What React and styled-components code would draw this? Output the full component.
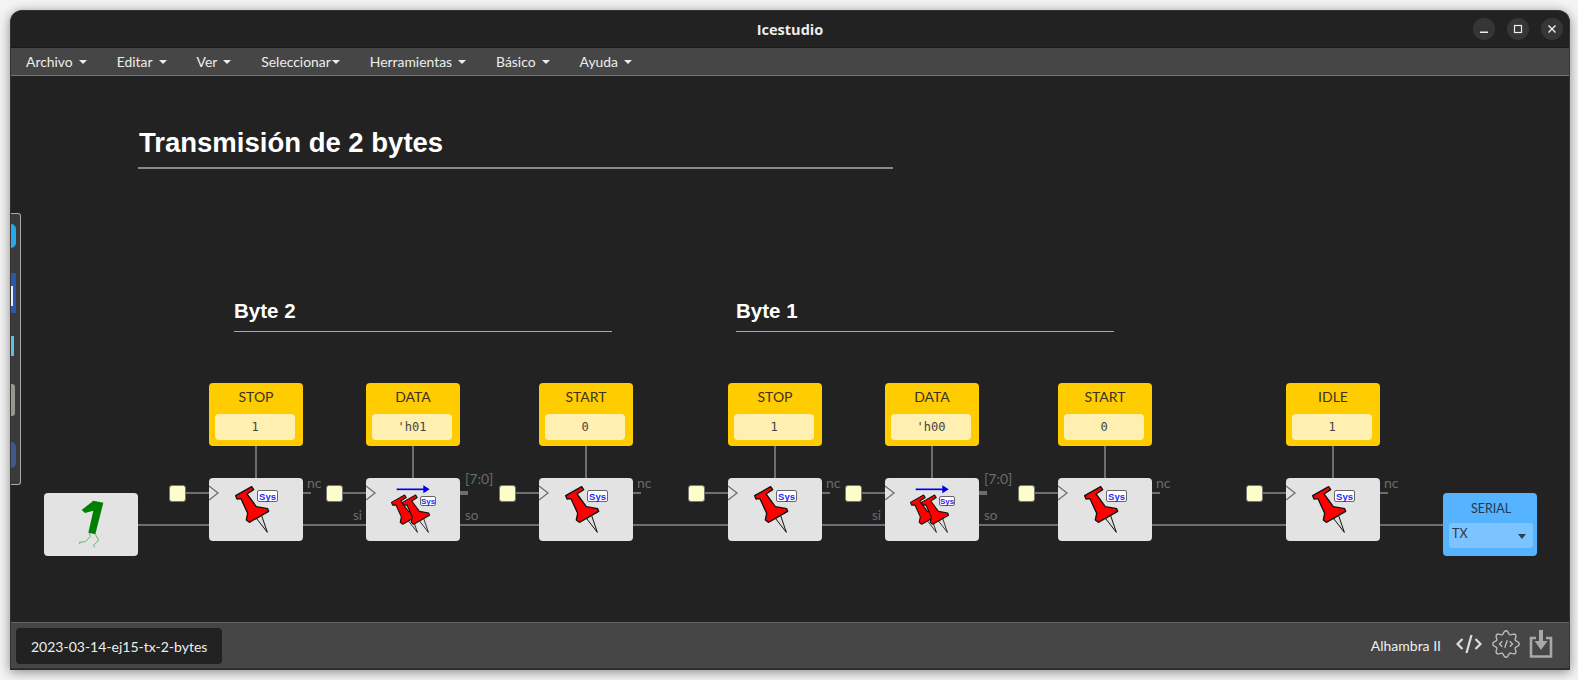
import React from 'react';
import styled, { createGlobalStyle } from 'styled-components';

const OX = 11;
const OY = 76;

const Global = createGlobalStyle`
  html, body { margin: 0; padding: 0; height: 100%; background: #f4f4f4; overflow: hidden; }
  #root { height: 100%; }
`;

const Page = styled.div`
  width: 1578px;
  height: 680px;
  padding: 10px 8px 10px 10px;
  box-sizing: border-box;
  font-family: Lato, "Noto Sans", sans-serif;
`;
const Win = styled.div`
  height: 660px;
  display: flex;
  flex-direction: column;
  background: #222;
  border: 1px solid #333;
  border-bottom-color: #2a2a2a;
  border-radius: 12px 12px 0 0;
  box-shadow: 0 2px 12px rgba(0,0,0,.45);
  overflow: hidden;
  box-sizing: border-box;
`;
const TitleBar = styled.header`
  height: 36px;
  flex: none;
  position: relative;
  display: flex;
  align-items: center;
  justify-content: center;
  background: #222;
  border-bottom: 1px solid #1a1a1a;
`;
const AppTitle = styled.h1`
  margin: 0;
  font: 700 14.5px "Open Sans", sans-serif;
  color: #ececec;
`;
const WinButtons = styled.div`
  position: absolute;
  right: 6px;
  top: 7px;
  display: flex;
  gap: 12px;
`;
const WinBtn = styled.button`
  width: 22px;
  height: 22px;
  padding: 0;
  border: 0;
  border-radius: 50%;
  background: #363636;
  display: flex;
  align-items: center;
  justify-content: center;
`;
const MenuBar = styled.nav`
  height: 28px;
  flex: none;
  display: flex;
  align-items: center;
  padding-left: 15px;
  background: #464646;
  border-bottom: 1px solid #757575;
  box-sizing: border-box;
`;
const MenuItem = styled.div`
  display: flex;
  align-items: center;
  gap: ${p => (p.$tight ? '1px' : '6px')};
  margin-right: 30px;
  font-size: 13.9px;
  color: #eee;
  &::after {
    content: '';
    border-top: 4px solid #eee;
    border-left: 4px solid transparent;
    border-right: 4px solid transparent;
  }
`;
const Canvas = styled.main`
  position: relative;
  flex: 1;
  background: #222;
  overflow: hidden;
`;
const Wires = styled.svg`
  position: absolute;
  left: 0;
  top: 0;
  width: 100%;
  height: 100%;
`;
const Node = styled.div`
  position: absolute;
  left: ${p => p.$x - OX}px;
  top: ${p => p.$y - OY}px;
`;
const Heading = styled(Node)`
  width: ${p => p.$w}px;
  box-sizing: border-box;
  padding: 0 0 6px ${p => (p.$big ? 1 : 0)}px;
  color: #fff;
  font-family: "Liberation Sans", Arial, sans-serif;
  font-weight: 700;
  font-size: ${p => p.$size}px;
  line-height: ${p => p.$lh}px;
  border-bottom: ${p => (p.$big ? 2 : 1.5)}px solid ${p => (p.$big ? '#8a8a8a' : '#aaa')};
`;
const ConstBox = styled(Node)`
  width: 94px;
  height: 63px;
  box-sizing: border-box;
  padding: 0 8px 6px 6px;
  display: flex;
  flex-direction: column;
  background: #ffcc00;
  border-radius: 4px;
`;
const ConstLabel = styled.div`
  height: 31px;
  line-height: 27px;
  padding-left: 2px;
  text-align: center;
  font-size: 14px;
  color: #3a3320;
`;
const ConstField = styled.div`
  flex: 1;
  background: #ffefb0;
  border-radius: 4px;
  display: flex;
  align-items: center;
  justify-content: center;
  font: 12px "DejaVu Sans Mono", monospace;
  color: #444;
`;
const Block = styled(Node)`
  width: 94px;
  height: 63px;
  background: #e3e3e3;
  border-radius: 4px;
`;
const Drawing = styled.svg`
  position: absolute;
  left: 0;
  top: 0;
`;
const Sys = styled.span`
  position: absolute;
  left: ${p => p.$x}px;
  top: ${p => p.$y}px;
  width: ${p => p.$w}px;
  height: ${p => p.$h}px;
  box-sizing: border-box;
  display: flex;
  align-items: center;
  justify-content: center;
  background: #fff;
  border: 1px solid #666;
  border-radius: 2px;
  color: #1f1fff;
  font: 700 ${p => p.$f}px "Liberation Sans", Arial, sans-serif;
`;
const PortLabel = styled(Node)`
  color: #6b6b6b;
  font-size: ${p => p.$size || 14}px;
  line-height: 16px;
`;
const Clock = styled(Node)`
  width: 17px;
  height: 17px;
  box-sizing: border-box;
  background: #fdfccb;
  border: 1px solid #777;
  border-radius: 3px;
`;
const SerialBox = styled(Node)`
  width: 94px;
  height: 63px;
  box-sizing: border-box;
  padding: 0 4px 8px 6px;
  display: flex;
  flex-direction: column;
  background: #55b3ff;
  border-radius: 4px;
`;
const SerialLabel = styled.div`
  height: 30px;
  line-height: 31px;
  text-align: center;
  font-size: 12.5px;
  color: #26384a;
`;
const SerialField = styled.div`
  flex: 1;
  position: relative;
  display: flex;
  align-items: center;
  padding: 0 0 4px 3px;
  box-sizing: border-box;
  background: #7cc4ff;
  border-radius: 3px;
  font-size: 12.5px;
  color: #26384a;
  &::after {
    content: '';
    position: absolute;
    right: 7px;
    top: 11px;
    border-top: 5px solid #2c4053;
    border-left: 4px solid transparent;
    border-right: 4px solid transparent;
  }
`;
const Dock = styled.aside`
  position: absolute;
  left: 0;
  top: 137px;
  width: 10px;
  height: 272px;
  box-sizing: border-box;
  background: #3a3a3a;
  border: 1px solid #aaa;
  border-left: 0;
  border-radius: 0 3px 3px 0;
`;
const DockIcon = styled.span`
  position: absolute;
  left: 0;
  top: ${p => p.$y}px;
  width: ${p => p.$w}px;
  height: ${p => p.$h}px;
  background: ${p => p.$c};
  border-radius: ${p => p.$r || '0'};
`;
const Footer = styled.footer`
  height: 47px;
  flex: none;
  display: flex;
  align-items: center;
  padding: 0 16px 0 5px;
  box-sizing: border-box;
  background: #464646;
  border-top: 1px solid #666;
  border-bottom: 1px solid #2f2f2f;
`;
const FileTab = styled.div`
  width: 206px;
  height: 36px;
  margin-top: 1px;
  padding-left: 15px;
  box-sizing: border-box;
  display: flex;
  align-items: center;
  background: #222;
  border-radius: 4px;
  color: #eee;
  font-size: 14px;
`;
const BoardName = styled.div`
  margin-left: auto;
  margin-right: 15px;
  color: #eee;
  font-size: 14px;
`;
const Tools = styled.div`
  display: flex;
  align-items: center;
  gap: 9.5px;
  margin-bottom: 3px;
`;

function PinShape({ dx = 0, dy = 0, s = 1, sw = 4 }) {
  return (
    <g transform={`translate(${dx} ${dy}) scale(${s})`}>
      <polygon points="155,146 169,134 187,187" fill="#ddd" stroke="#111" strokeWidth="3" strokeLinejoin="round" />
      <path
        d="M92 77 L140 50 L146 59 L126 72 L154 110 L188 116 L191 124 L133 157 L124 150 L128 130 L108 86 L96 87 Z"
        fill="#f00"
        stroke="#111"
        strokeWidth={sw}
        strokeLinejoin="round"
      />
    </g>
  );
}

function OnePin() {
  return (
    <>
      <Drawing width="94" height="63" viewBox="12 24 282 189">
        <PinShape />
      </Drawing>
      <Sys $x={48} $y={12} $w={21} $h={12} $f={9.5}>Sys</Sys>
    </>
  );
}

function TwoPins() {
  return (
    <>
      <Drawing width="94" height="63" viewBox="18 24 282 189">
        <line x1="110" y1="58" x2="195" y2="58" stroke="#0000f0" strokeWidth="5" />
        <polygon points="190,46 209,58 190,70" fill="#0000f0" />
        <PinShape dx={19} dy={34} s={0.82} />
        <PinShape dx={52} dy={34} s={0.82} />
      </Drawing>
      <Sys $x={54} $y={18} $w={16} $h={10} $f={8}>Sys</Sys>
    </>
  );
}

function OneGlyph() {
  return (
    <Drawing width="94" height="63" viewBox="12 9 282 189">
      <g fill="none" stroke="#6fae6f" strokeWidth="3" strokeLinejoin="round">
        <path d="M148 130 L151 140 L136 155 L118 157 L120 163" />
        <path d="M166 133 L176 150 L160 167 L165 172" />
      </g>
      <polygon points="125,60 160,32 190,38 166,133 145,128 160,62 135,69" fill="#008000" />
    </Drawing>
  );
}

const constants = [
  { x: 209, label: 'STOP', value: '1' },
  { x: 366, label: 'DATA', value: "'h01", two: true },
  { x: 539, label: 'START', value: '0' },
  { x: 728, label: 'STOP', value: '1' },
  { x: 885, label: 'DATA', value: "'h00", two: true },
  { x: 1058, label: 'START', value: '0' },
  { x: 1286, label: 'IDLE', value: '1' },
];
const clockX = [169, 326, 499, 688, 845, 1018, 1246];
const menus = ['Archivo', 'Editar', 'Ver', 'Seleccionar', 'Herramientas', 'Básico', 'Ayuda'];

function cogPath() {
  const pts = [];
  for (let i = 0; i < 96; i++) {
    const a = (i / 96) * Math.PI * 2;
    const r = 10.8 + 1.5 * Math.cos(8 * a);
    pts.push(`${(13 + r * Math.sin(a)).toFixed(2)} ${(13 - r * Math.cos(a)).toFixed(2)}`);
  }
  return `M${pts.join('L')}Z`;
}

export default function App() {
  return (
    <Page>
      <Global />
      <Win>
        <TitleBar>
          <AppTitle>Icestudio</AppTitle>
          <WinButtons>
            <WinBtn aria-label="minimize">
              <svg width="10" height="10" viewBox="0 0 10 10"><rect x="1" y="7.5" width="8" height="1.5" fill="#eee" /></svg>
            </WinBtn>
            <WinBtn aria-label="maximize">
              <svg width="10" height="10" viewBox="0 0 10 10"><rect x="1.5" y="1.5" width="7" height="7" fill="none" stroke="#eee" strokeWidth="1.2" /></svg>
            </WinBtn>
            <WinBtn aria-label="close">
              <svg width="10" height="10" viewBox="0 0 10 10"><path d="M1.5 1.5L8.5 8.5M8.5 1.5L1.5 8.5" stroke="#eee" strokeWidth="1.4" /></svg>
            </WinBtn>
          </WinButtons>
        </TitleBar>
        <MenuBar>
          {menus.map(m => (
            <MenuItem key={m} $tight={m === 'Seleccionar'}>{m}</MenuItem>
          ))}
        </MenuBar>
        <Canvas>
          <Wires>
            <g transform={`translate(${-OX} ${-OY})`} stroke="#6e6e6e" fill="none" strokeWidth="2">
              <line x1="138" y1="525" x2="1443" y2="525" />
              {constants.map((c, i) => (
                <g key={i}>
                  <line x1={c.x + 47} y1="446" x2={c.x + 47} y2="478" />
                  <line x1={clockX[i] + 16} y1="493" x2={c.x} y2="493" />
                  {c.two ? (
                    <line x1={c.x + 94} y1="493" x2={c.x + 102} y2="493" strokeWidth="4" />
                  ) : (
                    <line x1={c.x + 94} y1="493" x2={c.x + 102} y2="493" />
                  )}
                </g>
              ))}
            </g>
          </Wires>

          <Heading $x={138} $y={124} $w={755} $size={27.5} $lh={37} $big>Transmisión de 2 bytes</Heading>
          <Heading $x={234} $y={297} $w={378} $size={20.5} $lh={28}>Byte 2</Heading>
          <Heading $x={736} $y={297} $w={378} $size={20.5} $lh={28}>Byte 1</Heading>

          {constants.map((c, i) => (
            <React.Fragment key={i}>
              <ConstBox $x={c.x} $y={383}>
                <ConstLabel>{c.label}</ConstLabel>
                <ConstField>{c.value}</ConstField>
              </ConstBox>
              <Block $x={c.x} $y={478}>
                <Drawing width="12" height="30" viewBox="0 0 12 30">
                  <polyline points="0,8 9,15 0,22" fill="#e3e3e3" stroke="#6e6e6e" strokeWidth="1.3" />
                </Drawing>
                {c.two ? <TwoPins /> : <OnePin />}
              </Block>
              <Clock $x={clockX[i]} $y={485} />
              {c.two ? (
                <>
                  <PortLabel $x={c.x + 99} $y={471}>[7:0]</PortLabel>
                  <PortLabel $x={c.x - 13} $y={507} $size={13.5}>si</PortLabel>
                  <PortLabel $x={c.x + 99} $y={507} $size={13.5}>so</PortLabel>
                </>
              ) : (
                <PortLabel $x={c.x + 98} $y={475}>nc</PortLabel>
              )}
            </React.Fragment>
          ))}

          <Block $x={44} $y={493}>
            <OneGlyph />
          </Block>

          <SerialBox $x={1443} $y={493}>
            <SerialLabel>SERIAL</SerialLabel>
            <SerialField>TX</SerialField>
          </SerialBox>

          <Dock>
            <DockIcon $y={10} $w={5} $h={24} $c="#29a9e8" $r="0 6px 6px 0" />
            <DockIcon $y={59} $w={5} $h={40} $c="#2a56b0" />
            <DockIcon $y={72} $w={2} $h={20} $c="#e8eefa" />
            <DockIcon $y={122} $w={3} $h={20} $c="#5cc0dc" />
            <DockIcon $y={170} $w={4} $h={32} $c="#97978f" $r="0 3px 3px 0" />
            <DockIcon $y={228} $w={5} $h={26} $c="#3f5890" $r="0 13px 13px 0" />
          </Dock>
        </Canvas>
        <Footer>
          <FileTab>2023-03-14-ej15-tx-2-bytes</FileTab>
          <BoardName>Alhambra II</BoardName>
          <Tools>
            <svg width="26" height="24" viewBox="0 0 26 24" fill="none" stroke="#ddd" strokeWidth="2.2">
              <path d="M6.5 7L1.5 12L6.5 17" />
              <path d="M15.5 3L10.5 21" />
              <path d="M19.5 7L24.5 12L19.5 17" />
            </svg>
            <svg width="28" height="28" viewBox="0 0 26 26" fill="none" stroke="#bbb" strokeWidth="1.3">
              <path d={cogPath()} />
              <path d="M9.5 10.5L7 13L9.5 15.5M16.5 10.5L19 13L16.5 15.5M14.2 9.5L11.8 16.5" />
            </svg>
            <svg width="24" height="30" viewBox="0 0 24 30" fill="none">
              <path d="M7 9H2V27.5H22V9H17" stroke="#a8a8a8" strokeWidth="2.6" />
              <path d="M10 1H14V12H18.5L12 21L5.5 12H10Z" fill="#a8a8a8" />
            </svg>
          </Tools>
        </Footer>
      </Win>
    </Page>
  );
}
